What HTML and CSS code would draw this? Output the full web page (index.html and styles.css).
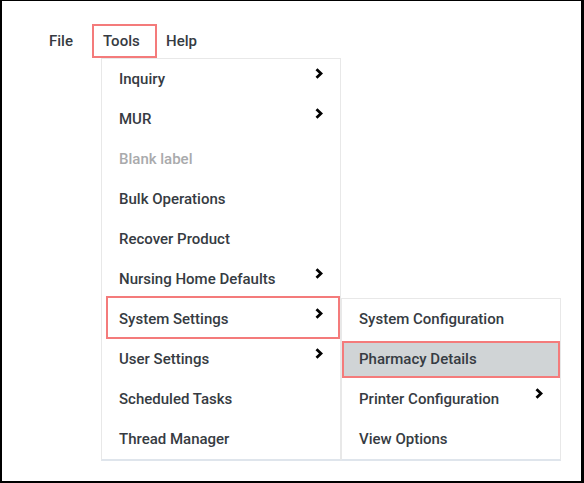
FILE: index.html
```html
<!DOCTYPE html>
<html>
<head>
<meta charset="utf-8">
<link rel="stylesheet" href="styles.css">
</head>
<body>
<div class="frame">
  <div class="menubar">
    <div class="menu-item file">File</div>
    <div class="menu-item active">Tools
      <div class="dropdown">
        <div class="dd-item">Inquiry<svg class="chev" viewBox="0 0 8 11"><path d="M1.5 1.2 L6 5.5 L1.5 9.8"/></svg></div>
        <div class="dd-item">MUR<svg class="chev" viewBox="0 0 8 11"><path d="M1.5 1.2 L6 5.5 L1.5 9.8"/></svg></div>
        <div class="dd-item disabled">Blank label</div>
        <div class="dd-item">Bulk Operations</div>
        <div class="dd-item">Recover Product</div>
        <div class="dd-item">Nursing Home Defaults<svg class="chev" viewBox="0 0 8 11"><path d="M1.5 1.2 L6 5.5 L1.5 9.8"/></svg></div>
        <div class="dd-item open">
          <span class="outline"></span>
          System Settings<svg class="chev" viewBox="0 0 8 11"><path d="M1.5 1.2 L6 5.5 L1.5 9.8"/></svg>
          <div class="submenu">
            <div class="dd-item">System Configuration</div>
            <div class="dd-item selected"><span class="sel-bg"></span><span class="label">Pharmacy Details</span></div>
            <div class="dd-item">Printer Configuration<svg class="chev" viewBox="0 0 8 11"><path d="M1.5 1.2 L6 5.5 L1.5 9.8"/></svg></div>
            <div class="dd-item">View Options</div>
          </div>
        </div>
        <div class="dd-item">User Settings<svg class="chev" viewBox="0 0 8 11"><path d="M1.5 1.2 L6 5.5 L1.5 9.8"/></svg></div>
        <div class="dd-item">Scheduled Tasks</div>
        <div class="dd-item">Thread Manager</div>
      </div>
    </div>
    <div class="menu-item help">Help</div>
  </div>
</div>
</body>
</html>
```

FILE: styles.css
```css
html, body {
  margin: 0;
  padding: 0;
  background: #000;
}

.frame {
  width: 584px;
  height: 483px;
  box-sizing: border-box;
  border-style: solid;
  border-color: #000;
  border-width: 1px 3px 2px 2px;
  background: #fff;
  font-family: Roboto, "Noto Sans", sans-serif;
  font-weight: 500;
  font-size: 15px;
  color: #363b42;
}

.menubar {
  display: flex;
  padding: 23px 0 0 36px;
}

.menu-item {
  position: relative;
  height: 34px;
  box-sizing: border-box;
  padding: 0 0 0 11px;
  line-height: 34px;
}

.menu-item.file {
  width: 54px;
}

.menu-item.help {
  padding-left: 9px;
}

.menu-item.active {
  width: 65px;
  border: 2px solid #f47b7b;
  padding: 0 0 0 9px;
  line-height: 30px;
}

.dropdown {
  position: absolute;
  top: 32px;
  left: 7px;
  width: 240px;
  box-sizing: border-box;
  background: #fff;
  border: 1px solid #e8e8e8;
  border-bottom: 2px solid #dfe5ec;
  z-index: 5;
}

.dd-item {
  position: relative;
  height: 40px;
  line-height: 40px;
  padding-left: 17px;
  white-space: nowrap;
  color: #363b42;
}

.dd-item.disabled {
  color: #a9aaac;
}

.chev {
  position: absolute;
  right: 17px;
  top: 9px;
  width: 8px;
  height: 11px;
  fill: none;
  stroke: #000;
  stroke-width: 2.8;
  stroke-linejoin: miter;
}

.outline {
  position: absolute;
  left: 4px;
  top: -3px;
  right: 0;
  bottom: 0;
  border: 2px solid #f47b7b;
  pointer-events: none;
}

.submenu {
  position: absolute;
  top: -1px;
  left: 239px;
  width: 220px;
  box-sizing: border-box;
  background: #fff;
  border: 1px solid #e8e8e8;
  border-bottom: 2px solid #dfe5ec;
}

.selected .sel-bg {
  position: absolute;
  left: 0;
  right: 0;
  top: 2px;
  bottom: 1px;
  background: #d0d4d6;
  border: 2px solid #f47b7b;
}

.selected .label {
  position: relative;
}
```
